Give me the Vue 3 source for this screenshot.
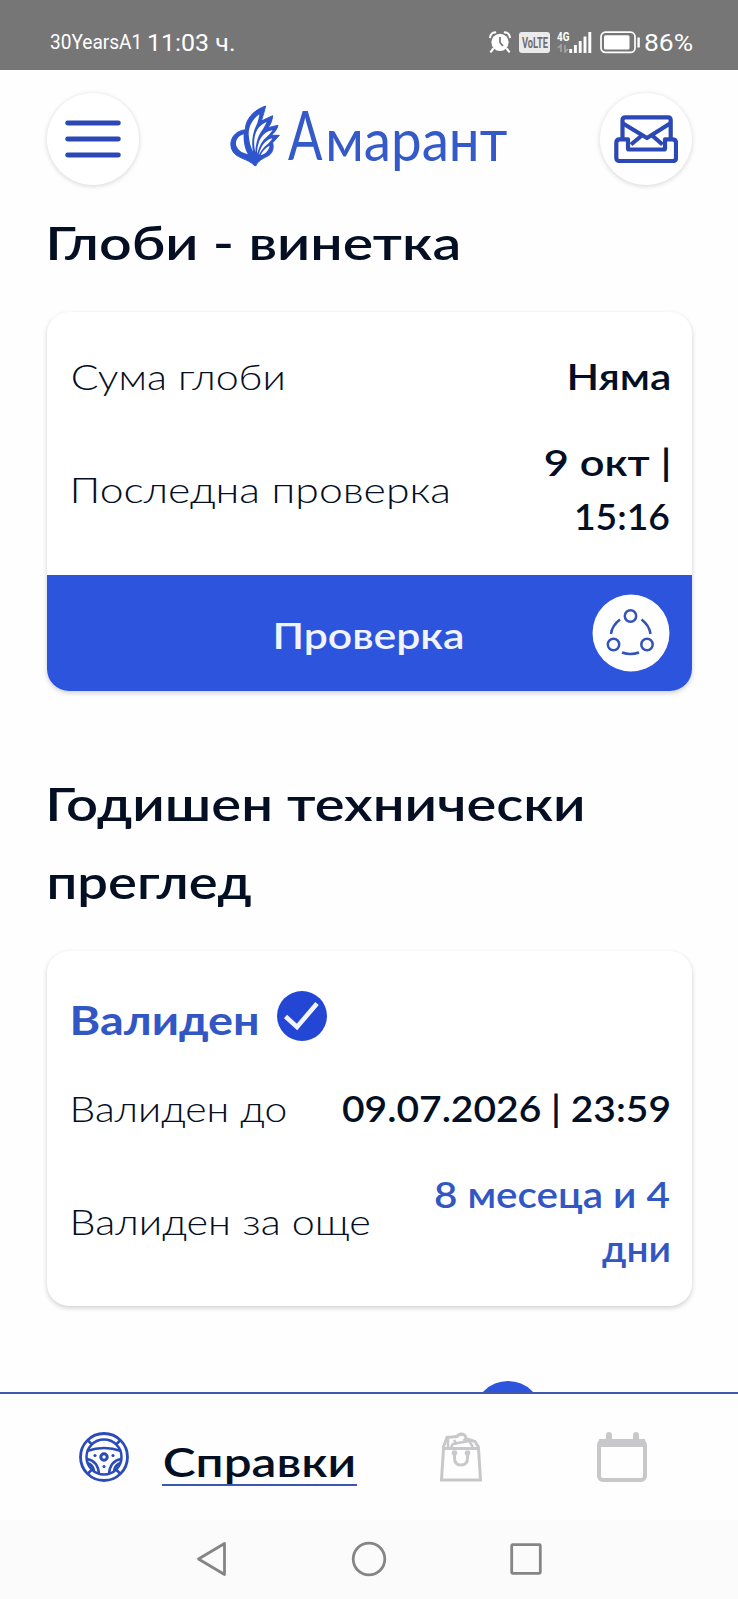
<script setup>
import { h } from 'vue'

const ctx = document.createElement('canvas').getContext('2d')

// One line of text whose ink spans exactly `w` pixels; capitals are centred in `lh`.
const Fit = (p) => {
  const font = p.font || 'Lato'
  const size = Number(p.s)
  const lh = Number(p.lh || size)
  ctx.font = `${p.k || 400} ${size}px "${font}"`
  const m = ctx.measureText(p.t)
  const ratio = p.w / (m.actualBoundingBoxLeft + m.actualBoundingBoxRight)
  return h('svg', { class: 'fit', width: p.w, height: lh, lang: 'bg' }, [
    h('text', {
      x: m.actualBoundingBoxLeft * ratio,
      y: lh / 2 + size * 0.36,
      'font-family': `"${font}", "Open Sans", sans-serif`,
      'font-size': size,
      'font-weight': p.k || 400,
      fill: 'currentColor',
      textLength: m.width * ratio,
      lengthAdjust: 'spacingAndGlyphs',
    }, p.t),
  ])
}
Fit.props = ['t', 'w', 's', 'k', 'lh', 'font']
</script>

<template>
  <div class="screen" lang="bg">
    <div class="status">
      <Fit class="carrier" t="30YearsA1" w="89" s="20.5" k="400" lh="24" font="Roboto" />
      <Fit class="clock" t="11:03 ч." w="85" s="24.5" k="400" lh="24" font="Roboto" />
      <div class="sys">
        <svg class="alarm" width="22" height="22" viewBox="0 0 22 22">
          <circle cx="11" cy="11.3" r="8.6" fill="#fff" />
          <path d="M1.2 6.2 A5 5 0 0 1 6.2 1.4 M20.8 6.2 A5 5 0 0 0 15.8 1.4 M4 18 L2 20.6 M18 18 L20 20.6" stroke="#fff" stroke-width="2.2" fill="none" stroke-linecap="round" />
          <path d="M11 6 V11.5 L14 15" stroke="#767676" stroke-width="1.7" fill="none" />
        </svg>
        <div class="volte"><Fit t="VoLTE" w="26" s="14.5" k="700" lh="21" font="Roboto" /></div>
        <div class="signal">
          <div class="net">
            <Fit t="4G" w="12" s="12.5" k="700" lh="10" font="Roboto" />
            <svg width="12" height="9" viewBox="0 0 12 9"><path d="M1 4 L4 1 V8 M11 5 L8 8 V1" stroke="#a3a3a3" stroke-width="1.7" fill="none" /></svg>
          </div>
          <svg width="23" height="22" viewBox="0 0 23 22"><path d="M1.7 18V22 M6.4 14V22 M11.2 10V22 M16 5.500V22 M20.800 1V22" stroke="#fff" stroke-width="2.900" fill="none" /></svg>
        </div>
        <svg class="battery" width="41" height="23" viewBox="0 0 41 23">
          <rect x="1" y="1.200" width="34" height="20.200" rx="4.500" fill="none" stroke="#fff" stroke-width="1.700" />
          <rect x="4" y="4.200" width="25.500" height="14.200" rx="1.500" fill="#fff" />
          <path d="M38.600 6.500V16.500" stroke="#fff" stroke-width="2.400" />
        </svg>
        <Fit t="86%" w="47" s="24.5" k="400" lh="24" font="Roboto" />
      </div>
    </div>

    <header class="head">
      <button class="round">
        <svg width="56" height="38" viewBox="0 0 56 38"><path d="M2.600 3H53.400M2.600 19H53.400M2.600 35H53.400" stroke="#2b48b4" stroke-width="4.800" stroke-linecap="round" /></svg>
      </button>
      <div class="logo">
        <svg class="leaf" width="70" height="85" viewBox="0 0 210 255">
          <g fill="#2f55cc" stroke="#2f55cc" stroke-width="3">
            <path d="M76 104C42 108 26 136 35 162C46 192 82 188 104 212H108C112 200 128 190 142 184C158 176 162 160 158 143L178 121L154 121C164 112 171 103 174 91L144 98C152 88 156 78 158 62L124 78C129 64 133 48 137 33C101 45 77 72 76 104Z" />
          </g>
          <path d="M71 118C49 124 42 145 53 160C60 171 72 174 84 178C74 162 70 140 71 118Z" fill="#fff" />
          <g fill="#fff">
            <path d="M118 58C100 70 86 92 86 118C87 140 93 158 99 170C93 142 98 112 111 86C115 76 117 67 118 58Z" />
            <path d="M140 81C122 88 109 102 104 126C101 144 103 158 106 172C107 146 113 122 129 102C134 94 137 88 140 81Z" />
            <path d="M158 105C138 109 122 123 116 144C112 156 111 166 112 176C117 153 127 136 142 124C149 117 154 111 158 105Z" />
            <path d="M157 130C142 133 128 146 122 162C119 169 117 174 116 181C124 165 132 155 144 146C150 141 154 136 157 130Z" />
            <path d="M149 152C138 157 128 167 122 180C134 178 146 168 149 152Z" />
          </g>
        </svg>
        <div class="brand">
          <Fit t="А" w="35" s="67" k="400" lh="70" />
          <Fit class="rest" t="марант" w="178" s="58" k="400" lh="70" />
        </div>
      </div>
      <button class="round">
        <svg width="64" height="48" viewBox="0 0 64 48" fill="none" stroke="#2b48b4" stroke-width="4.200" stroke-linejoin="round">
          <path d="M8.500 24V5Q8.500 2.300 11.200 2.300H54Q56.700 2.300 56.700 5V24" />
          <path d="M9 8.500L33 23L56 8.500M17 29.500L28.500 20M48.500 29.500L37.500 20" />
          <path d="M5.500 24.300H14V33.500Q14 34.500 15 34.500H50Q51 34.500 51 33.500V24.300H58.500Q62 24.300 62 28V43Q62 46 59 46H5.500Q2.300 46 2.300 43V28Q2.300 24.300 5.500 24.300Z" />
        </svg>
      </button>
    </header>

    <main class="content">
      <h2><Fit t="Глоби - винетка" w="408" s="47" k="600" lh="78" /></h2>
      <section class="card">
        <div class="rows first">
          <div class="row"><Fit t="Сума глоби" w="210" s="36" k="300" lh="54" /><Fit class="v" t="Няма" w="99" s="36" k="600" lh="54" /></div>
          <div class="row"><Fit t="Последна проверка" w="375" s="36" k="300" lh="54" />
            <div class="v"><Fit t="9 окт |" w="124" s="36" k="600" lh="54" /><Fit t="15:16" w="93" s="36" k="600" lh="54" /></div>
          </div>
        </div>
        <button class="check">
          <Fit t="Проверка" w="186" s="36" k="600" lh="54" />
          <svg class="share" width="78" height="78" viewBox="0 0 78 78" fill="none" stroke="#3453b8" stroke-width="2.500">
            <circle cx="39" cy="39" r="38.500" fill="#fff" stroke="none" />
            <circle cx="38.500" cy="22" r="5.700" /><circle cx="21.500" cy="50.500" r="5.700" /><circle cx="55" cy="50.500" r="5.700" />
            <path d="M28 25.500Q20 31.500 19 40M49.500 25.500Q57.500 31.500 58.500 40M30 58.500Q38.500 61.500 47 58.500" />
          </svg>
        </button>
      </section>

      <h2 class="second"><Fit t="Годишен технически" w="533" s="47" k="600" lh="78" /><Fit t="преглед" w="201" s="47" k="600" lh="78" /></h2>
      <section class="card">
        <div class="rows late">
          <div class="valid">
            <Fit t="Валиден" w="184" s="41" k="700" lh="60" />
            <svg width="50" height="50" viewBox="0 0 50 50"><circle cx="25" cy="25" r="25" fill="#2347d4" /><path d="M8.500 25.500L20 36L40 12.500" fill="none" stroke="#f2f4ff" stroke-width="4.600" /></svg>
          </div>
          <div class="row"><Fit t="Валиден до" w="213" s="36" k="300" lh="54" /><Fit class="v" t="09.07.2026 | 23:59" w="327" s="36" k="600" lh="54" /></div>
          <div class="row"><Fit t="Валиден за още" w="297" s="36" k="300" lh="54" />
            <div class="v blue"><Fit t="8 месеца и 4" w="234" s="36" k="600" lh="54" /><Fit t="дни" w="67" s="36" k="600" lh="54" /></div>
          </div>
        </div>
      </section>
      <div class="peek"></div>
    </main>

    <nav class="tabs">
      <svg class="wheel" width="50" height="50" viewBox="0 0 50 50" fill="none" stroke="#2b4bb8" stroke-width="2.500">
        <circle cx="25" cy="25" r="23.500" stroke-width="2.800" /><circle cx="25" cy="25" r="17.500" />
        <path d="M9 8.500L13 12.500M41 8.500L37 12.500M9 41.500L13 37.500M41 41.500L37 37.500" />
        <path d="M8 19Q25 13 42 19M8 27Q19 29 20 42M42 27Q31 29 30 42M9 31Q14 33 15 39M41 31Q36 33 35 39" />
        <circle cx="25" cy="25" r="3.200" stroke-width="3" />
        <g fill="#2b4bb8" stroke="none"><circle cx="16" cy="23.500" r="1.600" /><circle cx="34" cy="23.500" r="1.600" /><circle cx="25" cy="34.500" r="1.600" /></g>
      </svg>
      <a class="current"><Fit t="Справки" w="190" s="41" k="600" lh="44" /></a>
      <svg class="bag" width="42" height="50" viewBox="0 0 42 50" fill="none" stroke="#c8c8ca" stroke-width="3">
        <path d="M3.500 16.500H38.500L40.500 48H1.500Z" />
        <path d="M3 16L7 5.500L17 4.500M39 16L35 9.500L27 7" />
        <path d="M8 5V15M14 8L17 12.500M11 15L13 12L29 9L33 15" stroke-width="2.500" />
        <path d="M16.500 5Q20 .5 24.500 3Q27.500 6 23.500 9" />
        <path d="M14.500 22V26Q14.500 33 21 33Q27.500 33 27.500 26V22" />
        <circle cx="14.500" cy="21" r="2.800" fill="#c8c8ca" stroke="none" /><circle cx="27.500" cy="21" r="2.800" fill="#c8c8ca" stroke="none" />
      </svg>
      <svg class="cal" width="50" height="50" viewBox="0 0 50 50" fill="none" stroke="#c8c8ca">
        <rect x="2" y="9" width="46" height="39" rx="4" stroke-width="4" />
        <path d="M2 11H48" stroke-width="8" /><path d="M12 3V9M39 3V9" stroke-width="6" stroke-linecap="round" />
      </svg>
    </nav>

    <footer class="android">
      <svg width="32" height="36" viewBox="0 0 32 36"><path d="M28.500 2.500V33.500L2.500 18Z" /></svg>
      <svg width="36" height="36" viewBox="0 0 36 36"><circle cx="18" cy="18" r="15.800" /></svg>
      <svg width="32" height="32" viewBox="0 0 32 32"><rect x="1.700" y="1.700" width="28.600" height="28.600" rx="1" /></svg>
    </footer>
  </div>
</template>

<style>
body { margin: 0; background: #fefefe; }
</style>
<style scoped>
* { box-sizing: border-box; }
.screen { width: 738px; height: 1599px; display: flex; flex-direction: column; overflow: hidden; background: #fefefe; color: #040f24; font-family: Lato, sans-serif; }
.fit { display: block; overflow: visible; flex: none; }
button { border: 0; padding: 0; font: inherit; }

.status { height: 70px; flex: none; background: #767676; color: #fff; display: flex; align-items: center; padding: 14px 46px 0 50px; }
.clock { margin-left: 10px; }
.sys { margin-left: auto; display: flex; align-items: center; }
.volte { margin-left: 8px; width: 31px; height: 21px; border-radius: 3px; background: #ebebeb; color: #6d6d6d; display: flex; justify-content: center; }
.signal { margin-left: 7px; display: flex; align-items: flex-end; }
.net { display: flex; flex-direction: column; gap: 3px; }
.battery { margin: 0 4px 0 8px; }

.head { height: 134px; flex: none; padding: 23px 46px 0 46.5px; display: flex; justify-content: space-between; align-items: flex-start; }
.round { width: 92px; height: 92px; border-radius: 50%; background: #fff; box-shadow: 0 1px 5px rgba(0, 0, 0, .17); display: flex; align-items: center; justify-content: center; }
.logo { display: flex; width: 298px; margin-top: 2px; }
.leaf { flex: none; }
.brand { display: flex; color: #3459c8; margin: 6px 0 0 -2px; }
.rest { margin: 4px 0 0 6px; }

.content { flex: 1; min-height: 0; overflow: hidden; padding: 0 46px 0 46.5px; }
h2 { margin: 0; padding-left: 3.5px; height: 78px; }
.card { margin-top: 30px; border-radius: 22px; background: #fff; box-shadow: 0 2px 5px rgba(0, 0, 0, .19); overflow: hidden; }
h2.second { margin-top: 74px; height: 156px; }
.rows { padding: 38px 23.500px 31px 26px; display: flex; flex-direction: column; gap: 32px; }
.rows.late { padding-top: 39px; padding-bottom: 30px; }
.row { display: flex; justify-content: space-between; align-items: center; }
.v { display: flex; flex-direction: column; align-items: flex-end; }
.valid { display: flex; align-items: center; gap: 20px; height: 60px; color: #3257c4; }
.valid svg:last-child { margin-top: -8px; }
.blue { color: #3257c4; }
.check { position: relative; width: 100%; height: 116px; background: #2d54dd; color: #eff4ff; display: flex; align-items: center; justify-content: center; padding-top: 5px; }
.share { position: absolute; right: 22px; top: 19px; }
.peek { width: 68px; height: 68px; border-radius: 50%; background: #2d54dd; margin: 75px 0 0 427px; }

.tabs { height: 128px; flex: none; border-top: 2px solid #4059ae; background: #fefefe; display: flex; align-items: flex-start; padding: 38px 91px 0 79px; }
.current { margin: 8px 0 0 33px; padding: 0 3px 0 2px; width: 195px; height: 46px; border-bottom: 2px solid #3c57ae; }
.bag { margin-left: 83px; }
.cal { margin-left: auto; }

.android { height: 79px; flex: none; background: #fbfbfb; display: flex; align-items: center; padding: 0 0 1px 196px; }
.android svg { fill: none; stroke: #858585; stroke-width: 2.800; stroke-linejoin: round; }
.android svg:nth-child(2) { margin-left: 123px; }
.android svg:nth-child(3) { margin-left: 123px; }
</style>
